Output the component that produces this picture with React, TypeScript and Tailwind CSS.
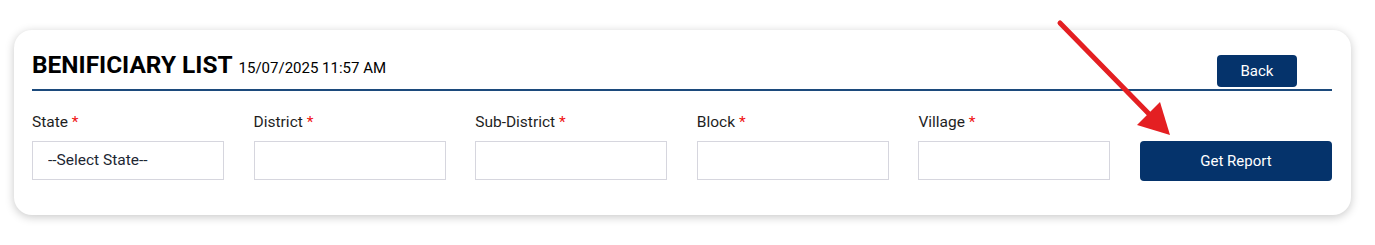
import React from "react";

const fields = ["State", "District", "Sub-District", "Block", "Village"];

export default function App() {
  return (
    <div className="relative w-[1375px] h-[245px] bg-white pt-[30px] pl-[14px] font-['Roboto','Liberation_Sans',sans-serif] text-[#212529]">
      <div className="w-[1337px] h-[185px] rounded-[18px] bg-white shadow-[0_2px_10px_rgba(0,0,0,0.22)] pl-[18px] pr-[19px]">
        {/* header */}
        <div className="flex items-start justify-between pt-[23px] pb-[2px] border-b-2 border-[#1c4a7c]">
          <div className="leading-[24px] text-black">
            <span className="text-[24.4px] font-bold">BENIFICIARY LIST</span>
            <span className="text-[15px] ml-[6px]">15/07/2025 11:57 AM</span>
          </div>
          <button className="mt-[2px] mr-[35px] w-[80px] h-[32px] rounded-[4px] bg-[#05336b] text-white text-[15px]">
            Back
          </button>
        </div>

        {/* filters */}
        <div className="grid grid-cols-6 gap-x-[29.6px] mt-[20px]">
          {fields.map((f) => (
            <div key={f} className="flex flex-col">
              <label className="text-[15.5px] leading-[22px] mb-[8px] text-[#1e1e1e]">
                {f} <span className="text-[#f01010]">*</span>
              </label>
              {f === "State" ? (
                <select className="appearance-none h-[39px] border border-[#d6d6de] bg-white pl-[15px] text-[15.5px] text-[#1d2733] outline-none">
                  <option>--Select State--</option>
                </select>
              ) : (
                <input className="h-[39px] border border-[#d6d6de] bg-white px-[15px] text-[15px] outline-none" />
              )}
            </div>
          ))}
          <div className="flex flex-col pt-[30px]">
            <button className="h-[40px] rounded-[4px] bg-[#05336b] text-white text-[15px]">
              Get Report
            </button>
          </div>
        </div>
      </div>

      {/* pointer arrow */}
      <svg className="absolute left-0 top-0 pointer-events-none" width="1375" height="245">
        <line x1="1060" y1="23" x2="1152" y2="117" stroke="#e41f22" strokeWidth="5" strokeLinecap="round" />
        <polygon points="1170,135 1137,125 1160,102" fill="#e41f22" />
      </svg>
    </div>
  );
}
